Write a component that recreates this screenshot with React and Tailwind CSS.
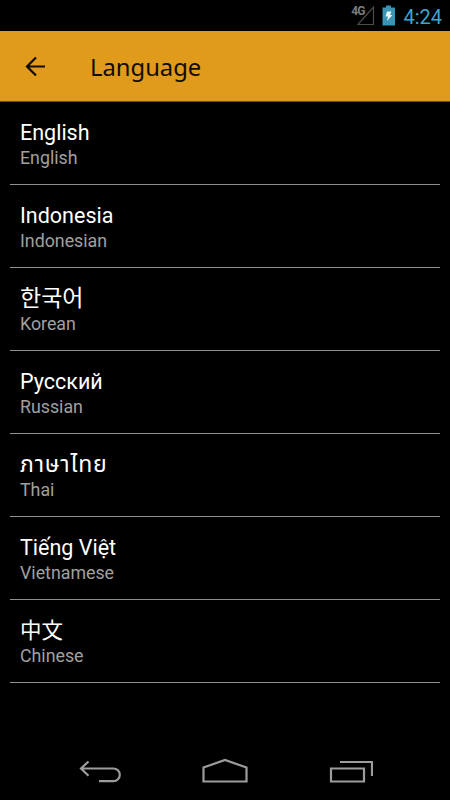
import React from 'react'

const languages = [
    { name: 'English', label: 'English' },
    { name: 'Indonesia', label: 'Indonesian' },
    { name: '한국어', label: 'Korean', style: 'text-[23px]' },
    { name: 'Русский', label: 'Russian' },
    { name: 'ภาษาไทย', label: 'Thai', style: 'text-[23px] tracking-[0.8px]' },
    { name: 'Tiếng Việt', label: 'Vietnamese' },
    { name: '中文', label: 'Chinese' }
]

const StatusBar = () => (
    <div className="flex h-[31px] items-start justify-end bg-black pr-[8px]">
        <span className="pt-[5px] text-[12px] leading-[12px] tracking-[-1px] font-bold text-[#7c7c7c] font-['Roboto',sans-serif]">4G</span>
        <svg className="-ml-[7px] mt-[6px]" width="18" height="20" viewBox="0 0 18 20" fill="none">
            <path d="M16.5 1v17.5H0.8z" stroke="#4c4c4c" strokeWidth="1.2" />
        </svg>
        <svg className="ml-[7px] mt-[5px]" width="14" height="21" viewBox="0 0 14 21">
            <path d="M4 0.5h5v2h4v18H0.5v-18H4z" fill="#3b93b5" />
            <path d="M5 6.5h4.500L8 10h2.500L5 16l1-4.500H3.500z" fill="#e8f6fb" />
        </svg>
        <span className="ml-[7px] pt-[5px] text-[20px] leading-[24px] text-[#3fa4cc] font-['Roboto',sans-serif]">4:24</span>
    </div>
)

const Header = () => (
    <header className="flex h-[71px] items-center border-b border-[#6b4b12] bg-[#e09b1c] pl-[24px]">
        <svg width="22" height="22" viewBox="0 0 22 22" fill="none" stroke="#120c02" strokeWidth="2.2">
            <path d="M21 11.5H3M12 2.500L3 11.500L12 20.500" />
        </svg>
        <h1 className="ml-[44px] pt-[2px] text-[23.800px] leading-[32px] text-[#120c02] font-['Noto_Sans',sans-serif]">Language</h1>
    </header>
)

const NavBar = () => (
    <nav className="flex h-[64px] justify-center gap-[79px] pt-[20px]">
        <svg width="46" height="28" viewBox="0 0 46 28" fill="none" stroke="#9c9c9c" strokeWidth="2.2">
            <path d="M4 12.500H36.500a6.300 6.300 0 0 1 0 12.600H22M11.500 5.500L4 12.500L11.500 19.800" />
        </svg>
        <svg width="46" height="28" viewBox="0 0 46 28" fill="none" stroke="#9c9c9c" strokeWidth="2.2">
            <path d="M1.500 25.500V11.500L23 4L44.500 11.500V25.500z" />
        </svg>
        <svg width="46" height="28" viewBox="0 0 46 28" fill="none" stroke="#9c9c9c" strokeWidth="2.2">
            <path d="M4 12.500H37V25.500H4zM13 6H45V20" />
        </svg>
    </nav>
)

const App = () => {
    return (
        <div className="flex h-screen w-full flex-col overflow-hidden bg-black font-['Roboto','Noto_Sans_CJK_KR','Noto_Sans_Thai','Noto_Sans',sans-serif]">
            <StatusBar />
            <Header />
            <ul className="flex-1 px-[10px]">
                {languages.map(item => (
                    <li key={item.label} className="h-[83px] border-b border-[#8f8f8f] px-[10px] pt-[17px]">
                        <p className={`h-[27px] leading-[28px] whitespace-nowrap text-white ${item.style || 'text-[21.5px]'}`}>{item.name}</p>
                        <p className="h-[24px] text-[17.8px] leading-[24px] text-[#a0a0a0]">{item.label}</p>
                    </li>
                ))}
            </ul>
            <NavBar />
        </div>
    )
}

export default App
